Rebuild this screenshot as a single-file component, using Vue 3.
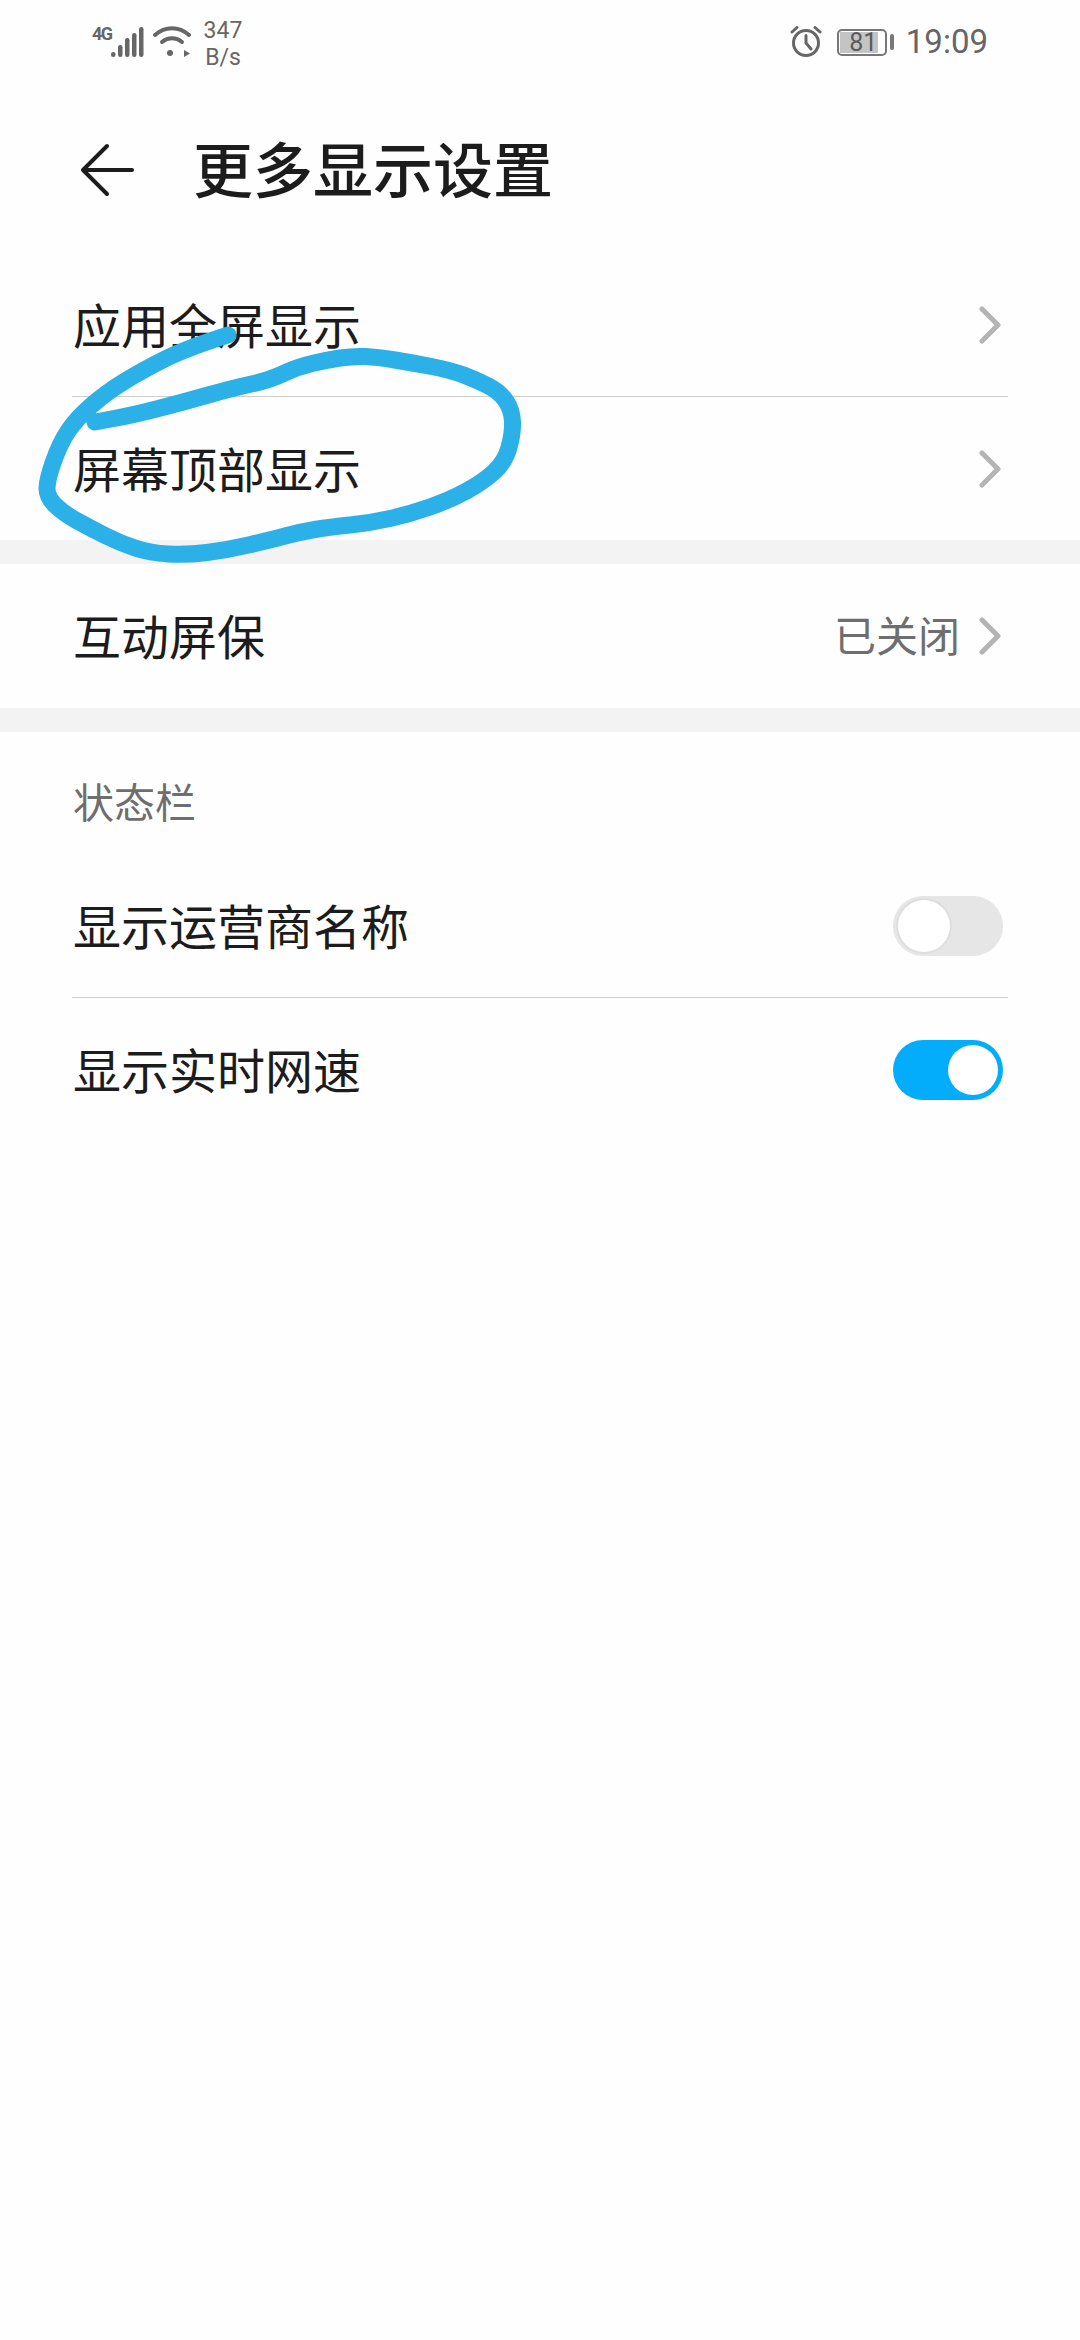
<template>
  <div class="page">
    <div class="status-bar">
      <div class="status-left">
        <span class="net-type">4G</span>
        <svg class="signal" width="34" height="32" viewBox="0 0 34 32">
          <rect v-for="b in signalBars" :key="b.x" :x="b.x" :y="b.y" width="4.5" :height="31 - b.y" rx="2.2" fill="#666" />
        </svg>
        <svg class="wifi" width="38" height="32" viewBox="0 0 38 32">
          <path d="M2 9C12 0 26 0 36 9" fill="none" stroke="#666" stroke-width="4" stroke-linecap="round" />
          <path d="M9 16C15 11 23 11 29 16" fill="none" stroke="#666" stroke-width="4" stroke-linecap="round" />
          <circle cx="17" cy="27" r="3" fill="#666" />
          <path d="M31 24l6 3.5-6 3.5z" fill="#666" />
        </svg>
        <div class="speed">
          <span>347</span>
          <span>B/s</span>
        </div>
      </div>
      <div class="status-right">
        <svg class="alarm" width="32" height="32" viewBox="0 0 32 32">
          <circle cx="16" cy="17" r="12.5" fill="none" stroke="#666" stroke-width="3" />
          <path d="M16 9.5v7.5l5 6M2 6l5-4.5M30 6l-5-4.5" fill="none" stroke="#666" stroke-width="3" stroke-linecap="round" />
        </svg>
        <div class="battery">
          <div class="battery-body">
            <div class="battery-fill"></div>
            <span class="battery-num">81</span>
          </div>
          <div class="battery-nub"></div>
        </div>
        <span class="time">19:09</span>
      </div>
    </div>

    <div class="header">
      <svg class="back" width="58" height="56" viewBox="0 0 58 56">
        <path d="M29 4L5 28l24 24M5 28h49" fill="none" stroke="#1c1c1c" stroke-width="4" stroke-linecap="round" stroke-linejoin="round" />
      </svg>
      <h1 class="title">更多显示设置</h1>
    </div>

    <div class="group first">
      <div class="row">
        <span class="label">应用全屏显示</span>
        <svg class="chevron" width="24" height="40" viewBox="0 0 24 40"><path d="M3 4l16 16L3 36" /></svg>
      </div>
      <div class="divider"></div>
      <div class="row">
        <span class="label">屏幕顶部显示</span>
        <svg class="chevron" width="24" height="40" viewBox="0 0 24 40"><path d="M3 4l16 16L3 36" /></svg>
      </div>
    </div>

    <div class="band"></div>

    <div class="group">
      <div class="row single">
        <span class="label">互动屏保</span>
        <div class="row-end">
          <span class="value">已关闭</span>
          <svg class="chevron" width="24" height="40" viewBox="0 0 24 40"><path d="M3 4l16 16L3 36" /></svg>
        </div>
      </div>
    </div>

    <div class="band"></div>

    <div class="group">
      <div class="section-title">状态栏</div>
      <div class="row">
        <span class="label">显示运营商名称</span>
        <div class="switch"><div class="knob"></div></div>
      </div>
      <div class="divider"></div>
      <div class="row">
        <span class="label">显示实时网速</span>
        <div class="switch on"><div class="knob"></div></div>
      </div>
    </div>

    <svg class="scribble" width="1080" height="600" viewBox="0 0 1080 600">
      <path :d="scribblePath" />
    </svg>
  </div>
</template>

<script setup>
const signalBars = [
  { x: 0, y: 26 },
  { x: 7, y: 19 },
  { x: 14, y: 12 },
  { x: 21, y: 7 },
  { x: 28, y: 1 }
]

// hand drawn circle round the second row, traced from the screenshot
const scribblePoints = [
  [228, 335], [187, 348], [143, 370], [107, 392], [77, 418], [60, 443], [47, 480], [47, 497],
  [63, 513], [90, 528], [120, 543], [150, 553], [187, 555], [227, 550], [270, 540], [300, 532],
  [330, 527], [370, 523], [410, 514], [450, 500], [483, 482], [505, 462], [513, 433], [512, 410],
  [500, 392], [477, 380], [450, 370], [413, 363], [377, 357], [353, 356], [327, 360], [297, 367],
  [270, 380], [233, 388], [180, 403], [133, 415], [95, 422]
]

const smoothPath = (pts) => {
  let d = `M${pts[0][0]} ${pts[0][1]}`
  for (let i = 1; i < pts.length - 1; i++) {
    const mx = (pts[i][0] + pts[i + 1][0]) / 2
    const my = (pts[i][1] + pts[i + 1][1]) / 2
    d += `Q${pts[i][0]} ${pts[i][1]} ${mx} ${my}`
  }
  const last = pts[pts.length - 1]
  return d + `L${last[0]} ${last[1]}`
}

const scribblePath = smoothPath(scribblePoints)
</script>

<style>
body {
  background: #fff;
}
</style>

<style scoped>
.page {
  position: relative;
  width: 1080px;
  height: 2340px;
  overflow: hidden;
  background: #fefefe;
  font-family: "Noto Sans CJK SC", "Noto Sans", sans-serif;
  color: #1c1c1c;
}

.status-bar {
  display: flex;
  justify-content: space-between;
  align-items: center;
  height: 84px;
  padding: 0 92px;
  box-sizing: border-box;
  color: #666;
  font-family: Roboto, sans-serif;
}

.status-left {
  display: flex;
  align-items: flex-start;
  height: 84px;
}

.net-type {
  margin-top: 24px;
  font-size: 18px;
  line-height: 20px;
  font-weight: 700;
  letter-spacing: -1.5px;
  white-space: nowrap;
}

.signal {
  margin: 26px 0 0 -1px;
}

.wifi {
  margin: 26px 0 0 8px;
}

.speed {
  display: flex;
  flex-direction: column;
  align-items: center;
  margin: 17px 0 0 13px;
  font-size: 23px;
  line-height: 27px;
}

.status-right {
  display: flex;
  align-items: center;
}

.battery {
  display: flex;
  align-items: center;
  margin-left: 15px;
}

.battery-body {
  position: relative;
  display: flex;
  align-items: center;
  justify-content: center;
  width: 50px;
  height: 27px;
  box-sizing: border-box;
  border: 2px solid #777;
  border-radius: 5px;
}

.battery-fill {
  position: absolute;
  left: 1px;
  top: 1px;
  bottom: 1px;
  width: 38px;
  background: #c4c4c4;
}

.battery-num {
  position: relative;
  margin-left: 3px;
  font-size: 25px;
  line-height: 23px;
  color: #5a5a5a;
}

.battery-nub {
  width: 4px;
  height: 16px;
  margin-left: 3px;
  border-radius: 2px;
  background: #777;
}

.time {
  margin-left: 12px;
  font-size: 33px;
  line-height: 40px;
}

.header {
  display: flex;
  align-items: center;
  height: 100px;
  margin-top: 36px;
  padding-left: 78px;
}

.back {
  flex-shrink: 0;
}

.title {
  margin: 0 0 6px 57px;
  font-size: 60px;
  line-height: 80px;
  font-weight: 500;
  color: #1c1c1c;
}

.group.first {
  margin-top: 33px;
}

.row {
  display: flex;
  justify-content: space-between;
  align-items: center;
  height: 143px;
  padding: 0 77px 0 73px;
}

.row.single {
  height: 144px;
}

.row-end {
  display: flex;
  align-items: center;
  gap: 19px;
}

.label {
  margin-bottom: 4px;
  font-size: 48px;
  line-height: 64px;
  color: #1c1c1c;
}

.value {
  margin-bottom: 4px;
  font-size: 42px;
  line-height: 56px;
  color: #6e6e6e;
}

.chevron {
  display: block;
}

.chevron path {
  fill: none;
  stroke: #b4b4b4;
  stroke-width: 5;
  stroke-linecap: round;
  stroke-linejoin: round;
}

.divider {
  height: 1px;
  margin: 0 72px;
  background: #cdcdcd;
}

.band {
  height: 24px;
  background: #f3f3f3;
}

.section-title {
  margin-bottom: 27px;
  padding: 41px 73px 0;
  font-size: 41px;
  line-height: 54px;
  color: #6e6e6e;
}

.switch {
  display: flex;
  align-items: center;
  width: 110px;
  height: 60px;
  padding: 4px 5px;
  box-sizing: border-box;
  border-radius: 30px;
  background: #e6e6e6;
}

.switch.on {
  justify-content: flex-end;
  background: #03adfb;
}

.knob {
  width: 52px;
  height: 52px;
  border-radius: 50%;
  background: #fff;
  box-shadow: 0 0 0 2px #dedede;
}

.switch.on .knob {
  width: 50px;
  height: 50px;
  box-shadow: none;
}

.scribble {
  position: absolute;
  left: 0;
  top: 0;
  pointer-events: none;
}

.scribble path {
  fill: none;
  stroke: #2bb0e8;
  stroke-width: 17;
  stroke-linecap: round;
  stroke-linejoin: round;
}
</style>
